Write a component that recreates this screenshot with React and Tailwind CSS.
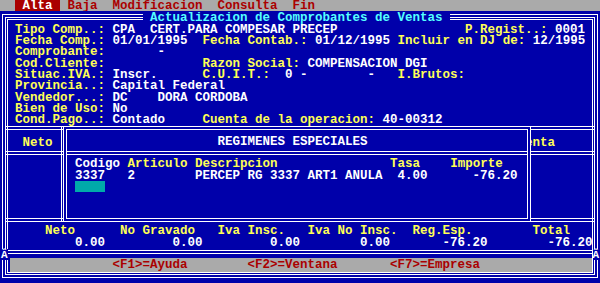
const Y = ({ children }) => <span className="text-[#ffff55]">{children}</span>;

export default function App() {
  return (
    <div className="w-[600px] h-[283px] overflow-hidden bg-[#0000aa] text-white font-bold text-[12.5px] leading-[14px] font-['Liberation_Mono','Courier_New',monospace] grid grid-cols-[repeat(80,7.5px)] grid-rows-[repeat(25,11.32px)]">
      {/* menu bar */}
      <div className="col-start-[1] col-end-[81] row-start-[1] bg-[#aaaaaa] overflow-hidden whitespace-pre text-[#aa0000] leading-[13.5px]">
        {"  "}
        <span className="bg-[#aa0000] text-white"> Alta </span>
        {" Baja  Modificacion  Consulta  Fin"}
      </div>

      {/* window frame */}
      <div className="col-start-[1] col-end-[81] row-start-[2] row-end-[26] ml-[2px] mr-[2px] mt-[3px] mb-[5px] border-[4px] border-double border-white" />
      <div className="col-start-[1] col-end-[81] row-start-[2] row-end-[26] ml-[7px] mr-[7px] mt-[8px] mb-[10px] border border-white" />

      {/* title */}
      <div className="col-start-[20] col-end-[61] row-start-[2] bg-[#0000aa] whitespace-pre text-[#55ffff] leading-[15px]">
        {" Actualizacion de Comprobantes de Ventas "}
      </div>

      {/* form */}
      <div className="col-start-[1] col-end-[81] row-start-[3] whitespace-pre">
        {"  "}<Y>Tipo Comp..:</Y>{" CPA  CERT.PARA COMPESAR PRECEP                 "}<Y>P.Regist..:</Y>{" 0001"}
      </div>
      <div className="col-start-[1] col-end-[81] row-start-[4] whitespace-pre">
        {"  "}<Y>Fecha Comp.:</Y>{" 01/01/1995  "}<Y>Fecha Contab.:</Y>{" 01/12/1995 "}<Y>Incluir en DJ de:</Y>{" 12/1995"}
      </div>
      <div className="col-start-[1] col-end-[81] row-start-[5] whitespace-pre">
        {"  "}<Y>Comprobante:</Y>{"       -"}
      </div>
      <div className="col-start-[1] col-end-[81] row-start-[6] whitespace-pre">
        {"  "}<Y>Cod.Cliente:</Y>{"             "}<Y>Razon Social:</Y>{" COMPENSACION DGI"}
      </div>
      <div className="col-start-[1] col-end-[81] row-start-[7] whitespace-pre">
        {"  "}<Y>Situac.IVA.:</Y>{" Inscr.      "}<Y>C.U.I.T.:</Y>{"  0 -        -   "}<Y>I.Brutos:</Y>
      </div>
      <div className="col-start-[1] col-end-[81] row-start-[8] whitespace-pre">
        {"  "}<Y>Provincia..:</Y>{" Capital Federal"}
      </div>
      <div className="col-start-[1] col-end-[81] row-start-[9] whitespace-pre">
        {"  "}<Y>Vendedor...:</Y>{" DC    DORA CORDOBA"}
      </div>
      <div className="col-start-[1] col-end-[81] row-start-[10] whitespace-pre">
        {"  "}<Y>Bien de Uso:</Y>{" No"}
      </div>
      <div className="col-start-[1] col-end-[81] row-start-[11] whitespace-pre">
        {"  "}<Y>Cond.Pago..:</Y>{" Contado     "}<Y>Cuenta de la operacion:</Y>{" 40-00312"}
      </div>

      {/* separators */}
      <div className="col-start-[1] col-end-[81] row-start-[12] self-start mt-[2px] mx-[5px] h-0 border-t-[4px] border-double border-white" />
      <div className="col-start-[1] col-end-[81] row-start-[14] self-start mt-[4px] mx-[5px] h-0 border-t-[4px] border-double border-white" />
      <div className="col-start-[1] col-end-[81] row-start-[20] self-start mt-[3px] mx-[5px] h-0 border-t-[4px] border-double border-white" />
      <div className="col-start-[1] col-end-[81] row-start-[23] self-start mt-[1px] mx-[5px] h-0 border-t-[4px] border-double border-white" />

      {/* underlying table header */}
      <div className="col-start-[4] col-end-[9] row-start-[13] whitespace-pre text-[#ffff55]">Neto</div>
      <div className="col-start-[69] col-end-[75] row-start-[13] whitespace-pre text-[#ffff55]">Cuenta</div>
      <div className="col-start-[9] row-start-[12] row-end-[21] justify-self-start ml-[1px] w-px mt-[3px] mb-[5px] bg-white" />

      {/* popup */}
      <div className="col-start-[9] col-end-[72] row-start-[12] row-end-[21] ml-[3px] mr-[1.5px] mt-[2px] mb-[4px] border-[4px] border-double border-white bg-[#0000aa]" />
      <div className="col-start-[30] col-end-[50] row-start-[13] whitespace-pre leading-[13px]">REGIMENES ESPECIALES</div>
      <div className="col-start-[9] col-end-[72] row-start-[14] self-start mt-[4px] ml-[6px] mr-[4.5px] h-0 border-t-[4px] border-double border-white" />
      <div className="col-start-[11] col-end-[70] row-start-[15] whitespace-pre leading-[12.5px]">
        {"Codigo "}<Y>Articulo</Y>{" "}<Y>Descripcion</Y>{"               "}<Y>Tasa</Y>{"    "}<Y>Importe</Y>
      </div>
      <div className="col-start-[11] col-end-[70] row-start-[16] whitespace-pre leading-[12.5px]">
        {"3337   2        PERCEP RG 3337 ART1 ANULA  4.00      -76.20"}
      </div>
      <div className="col-start-[11] col-end-[15] row-start-[17] bg-[#00aaaa]" />

      {/* totals */}
      <div className="col-start-[1] col-end-[81] row-start-[21] whitespace-pre leading-[10.5px] text-[#ffff55]">
        {"      Neto      No Gravado   Iva Insc.   Iva No Insc.  Reg.Esp.        Total"}
      </div>
      <div className="col-start-[1] col-end-[81] row-start-[22] whitespace-pre leading-[10.5px]">
        {"          0.00         0.00         0.00        0.00       -76.20        -76.20"}
      </div>

      {/* odd glyphs on the border */}
      <div className="col-start-[1] row-start-[23] bg-[#0000aa] pl-[1px] text-[11px] leading-[12px]">Â</div>
      <div className="col-start-[80] row-start-[23] bg-[#0000aa] text-[11px] leading-[12px]">Â</div>

      {/* footer */}
      <div className="col-start-[2] col-end-[80] row-start-[24] ml-[2px] mr-[1px] -mt-[2px] bg-[#aaaaaa]" />
      <div className="col-start-[1] col-end-[81] row-start-[24] whitespace-pre leading-[10px] text-[#aa0000]">
        {"               <F1>=Ayuda        <F2>=Ventana       <F7>=Empresa"}
      </div>
    </div>
  );
}
